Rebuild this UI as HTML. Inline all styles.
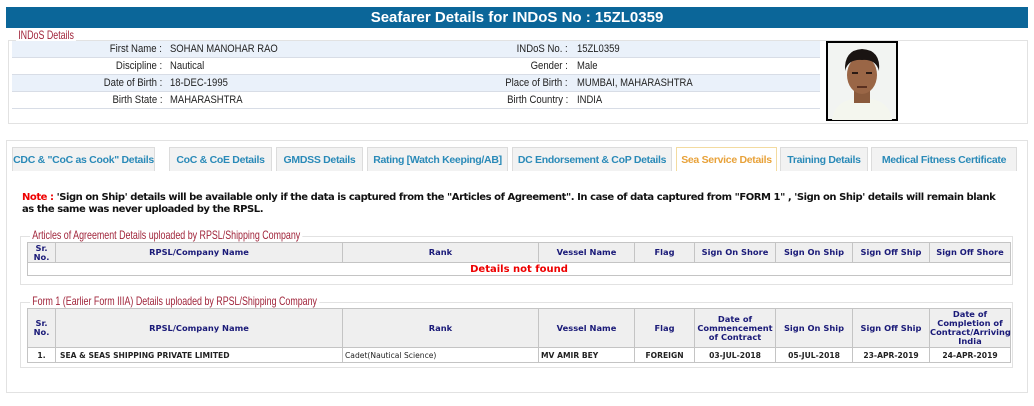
<!DOCTYPE html>
<html><head><meta charset="utf-8"><style>
*{margin:0;padding:0;box-sizing:border-box}
body{width:1034px;height:406px;background:#fff;font-family:"Liberation Sans",Arial,sans-serif;position:relative;overflow:hidden}
.a{position:absolute}
.hdr{left:6px;top:7px;width:1022px;height:21px;background:#0b6699;color:#fff;font:bold 15px "Liberation Sans",sans-serif;text-align:center;line-height:21px}
.fs{border:1px solid #e2e2e2}
.leg{background:#fff;color:#a0243a;font-size:12px;padding:0 3px;line-height:13px;transform:scaleX(0.74);transform-origin:left;white-space:nowrap}
.row{left:12px;width:808px;height:17px;border-bottom:1px solid #d8dde6;font-size:11px;color:#222;line-height:16px}
.row.b{background:#eaf1fa}
.lb{position:absolute;text-align:right;transform:scaleX(0.87);transform-origin:right;white-space:nowrap}
.v{position:absolute;transform:scaleX(0.86);transform-origin:left;white-space:nowrap}
.tab{top:147px;height:24px;border:1px solid #dcdcdc;border-bottom:none;background:#f2f2f2;color:#2a8ab8;font:bold 10.5px "Liberation Sans",sans-serif;text-align:center;line-height:24px;white-space:nowrap;overflow:hidden;letter-spacing:-0.3px}
.tab.act{background:#fff;color:#e8a23a;border-color:#f3dba0}
.note{left:22px;top:192px;width:988px;font:bold 10px "DejaVu Sans",sans-serif;color:#111;line-height:12px;letter-spacing:-0.45px}
table{position:absolute;border-collapse:collapse;font-family:"DejaVu Sans",sans-serif;table-layout:fixed}
th{background:#efefef;color:#1a1a78;font-size:8.3px;font-weight:bold;border:1px solid #c4c4c4;line-height:9px}
td{font-size:7.6px;font-weight:bold;color:#222;border:1px solid #c4c4c4;height:15px}
</style></head><body>
<div class="a hdr">Seafarer Details for INDoS No : 15ZL0359</div>
<div class="a fs" style="left:8px;top:40px;width:1020px;height:84px"></div>
<div class="a leg" style="left:16px;top:29px">INDoS Details</div>
<div class="a row b" style="top:41px"><span class="lb" style="right:658px">First Name :</span><span class="v" style="left:158px">SOHAN MANOHAR RAO</span><span class="lb" style="right:252px">INDoS No. :</span><span class="v" style="left:565px">15ZL0359</span></div>
<div class="a row" style="top:58px"><span class="lb" style="right:658px">Discipline :</span><span class="v" style="left:158px">Nautical</span><span class="lb" style="right:252px">Gender :</span><span class="v" style="left:565px">Male</span></div>
<div class="a row b" style="top:75px"><span class="lb" style="right:658px">Date of Birth :</span><span class="v" style="left:158px">18-DEC-1995</span><span class="lb" style="right:252px">Place of Birth :</span><span class="v" style="left:565px">MUMBAI, MAHARASHTRA</span></div>
<div class="a row" style="top:92px"><span class="lb" style="right:658px">Birth State :</span><span class="v" style="left:158px">MAHARASHTRA</span><span class="lb" style="right:252px">Birth Country :</span><span class="v" style="left:565px">INDIA</span></div>
<svg class="a" style="left:826px;top:41px" width="72" height="80" viewBox="0 0 72 80">
<rect x="1" y="1" width="70" height="78" fill="#f2f4f2" stroke="#000" stroke-width="2"/>
<path d="M6 79 Q8 62 26 58 L46 58 Q64 62 66 79Z" fill="#f4f6ee"/>
<rect x="28" y="48" width="16" height="14" fill="#8a5a3c"/>
<ellipse cx="36" cy="34" rx="15" ry="19" fill="#9a6646"/>
<path d="M19 30 Q18 9 36 8 Q55 9 53 30 Q50 18 36 19 Q22 18 19 30Z" fill="#1a1412"/>
<rect x="26" y="31" width="6" height="2" fill="#2a1a14"/><rect x="40" y="31" width="6" height="2" fill="#2a1a14"/>
<rect x="31" y="45" width="10" height="2" fill="#5a3020"/>
</svg>
<div class="a fs" style="left:6px;top:140px;width:1022px;height:253px"></div>
<div class="a tab" style="left:12px;width:143px">CDC &amp; "CoC as Cook" Details</div>
<div class="a tab" style="left:169px;width:103px">CoC &amp; CoE Details</div>
<div class="a tab" style="left:276px;width:87px">GMDSS Details</div>
<div class="a tab" style="left:367px;width:141px">Rating [Watch Keeping/AB]</div>
<div class="a tab" style="left:512px;width:160px">DC Endorsement &amp; CoP Details</div>
<div class="a tab act" style="left:676px;width:101px">Sea Service Details</div>
<div class="a tab" style="left:780px;width:88px">Training Details</div>
<div class="a tab" style="left:871px;width:146px">Medical Fitness Certificate</div>
<div class="a note"><span style="color:#e00">Note :</span> 'Sign on Ship' details will be available only if the data is captured from the "Articles of Agreement". In case of data captured from "FORM 1" , 'Sign on Ship' details will remain blank as the same was never uploaded by the RPSL.</div>
<div class="a fs" style="left:20px;top:236px;width:993px;height:49px"></div>
<div class="a leg" style="left:30px;top:229px">Articles of Agreement Details uploaded by RPSL/Shipping Company</div>
<table style="left:27px;top:242px;width:983px">
<colgroup><col style="width:28px"><col style="width:287px"><col style="width:196px"><col style="width:96px"><col style="width:60px"><col style="width:81px"><col style="width:77px"><col style="width:77px"><col style="width:81px"></colgroup>
<tr style="height:20px"><th>Sr.<br>No.</th><th>RPSL/Company Name</th><th>Rank</th><th>Vessel Name</th><th>Flag</th><th>Sign On Shore</th><th>Sign On Ship</th><th>Sign Off Ship</th><th>Sign Off Shore</th></tr>
<tr><td colspan="9" style="text-align:center;color:#e00;font-size:10px;height:13px;line-height:11px">Details not found</td></tr>
</table>
<div class="a fs" style="left:20px;top:302px;width:993px;height:66px"></div>
<div class="a leg" style="left:30px;top:295px">Form 1 (Earlier Form IIIA) Details uploaded by RPSL/Shipping Company</div>
<table style="left:27px;top:308px;width:983px">
<colgroup><col style="width:28px"><col style="width:287px"><col style="width:196px"><col style="width:96px"><col style="width:60px"><col style="width:81px"><col style="width:77px"><col style="width:77px"><col style="width:81px"></colgroup>
<tr style="height:39px"><th>Sr.<br>No.</th><th>RPSL/Company Name</th><th>Rank</th><th>Vessel Name</th><th>Flag</th><th>Date of<br>Commencement<br>of Contract</th><th>Sign On Ship</th><th>Sign Off Ship</th><th>Date of<br>Completion of<br>Contract/Arriving<br>India</th></tr>
<tr><td style="text-align:center">1.</td><td style="padding-left:4px">SEA &amp; SEAS SHIPPING PRIVATE LIMITED</td><td style="padding-left:2px;font-weight:normal">Cadet(Nautical Science)</td><td style="padding-left:2px">MV AMIR BEY</td><td style="text-align:center">FOREIGN</td><td style="text-align:center">03-JUL-2018</td><td style="text-align:center">05-JUL-2018</td><td style="text-align:center">23-APR-2019</td><td style="text-align:center">24-APR-2019</td></tr>
</table>
</body></html>
